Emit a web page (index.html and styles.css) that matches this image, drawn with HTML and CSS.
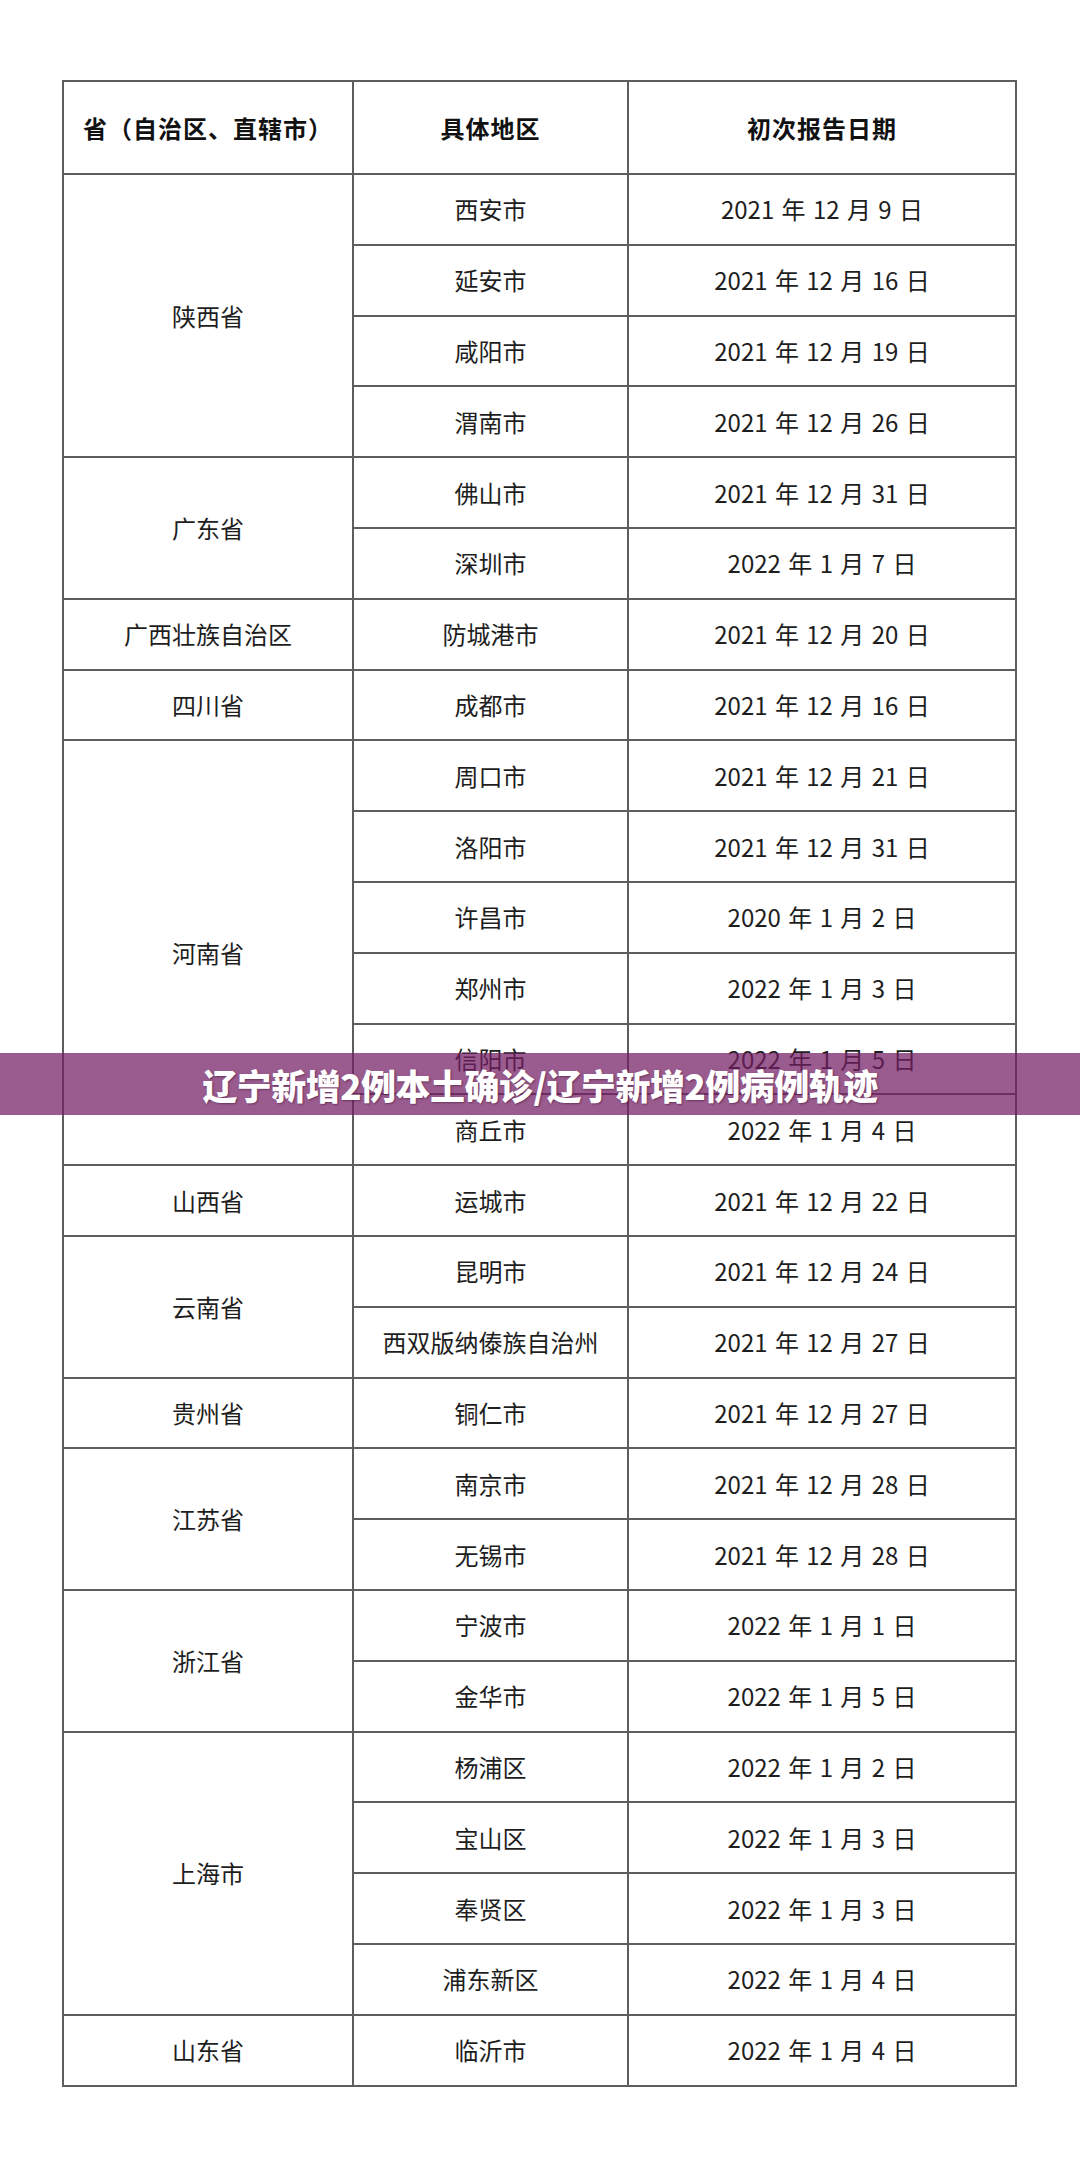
FILE: index.html
```html
<!DOCTYPE html>
<html lang="zh-CN">
<head>
<meta charset="utf-8">
<title>辽宁新增2例本土确诊</title>
<link rel="stylesheet" href="styles.css">
</head>
<body>
<div class="page">
  <table class="cases">
    <colgroup>
      <col class="c1"><col class="c2"><col class="c3">
    </colgroup>
    <thead>
      <tr><th>省（自治区、直辖市）</th><th>具体地区</th><th>初次报告日期</th></tr>
    </thead>
    <tbody>
      <tr><td rowspan="4">陕西省</td><td>西安市</td><td class="date">2021 年 12 月 9 日</td></tr>
      <tr><td>延安市</td><td class="date">2021 年 12 月 16 日</td></tr>
      <tr><td>咸阳市</td><td class="date">2021 年 12 月 19 日</td></tr>
      <tr><td>渭南市</td><td class="date">2021 年 12 月 26 日</td></tr>
      <tr><td rowspan="2">广东省</td><td>佛山市</td><td class="date">2021 年 12 月 31 日</td></tr>
      <tr><td>深圳市</td><td class="date">2022 年 1 月 7 日</td></tr>
      <tr><td>广西壮族自治区</td><td>防城港市</td><td class="date">2021 年 12 月 20 日</td></tr>
      <tr><td>四川省</td><td>成都市</td><td class="date">2021 年 12 月 16 日</td></tr>
      <tr><td rowspan="6">河南省</td><td>周口市</td><td class="date">2021 年 12 月 21 日</td></tr>
      <tr><td>洛阳市</td><td class="date">2021 年 12 月 31 日</td></tr>
      <tr><td>许昌市</td><td class="date">2020 年 1 月 2 日</td></tr>
      <tr><td>郑州市</td><td class="date">2022 年 1 月 3 日</td></tr>
      <tr><td>信阳市</td><td class="date">2022 年 1 月 5 日</td></tr>
      <tr><td>商丘市</td><td class="date">2022 年 1 月 4 日</td></tr>
      <tr><td>山西省</td><td>运城市</td><td class="date">2021 年 12 月 22 日</td></tr>
      <tr><td rowspan="2">云南省</td><td>昆明市</td><td class="date">2021 年 12 月 24 日</td></tr>
      <tr><td>西双版纳傣族自治州</td><td class="date">2021 年 12 月 27 日</td></tr>
      <tr><td>贵州省</td><td>铜仁市</td><td class="date">2021 年 12 月 27 日</td></tr>
      <tr><td rowspan="2">江苏省</td><td>南京市</td><td class="date">2021 年 12 月 28 日</td></tr>
      <tr><td>无锡市</td><td class="date">2021 年 12 月 28 日</td></tr>
      <tr><td rowspan="2">浙江省</td><td>宁波市</td><td class="date">2022 年 1 月 1 日</td></tr>
      <tr><td>金华市</td><td class="date">2022 年 1 月 5 日</td></tr>
      <tr><td rowspan="4">上海市</td><td>杨浦区</td><td class="date">2022 年 1 月 2 日</td></tr>
      <tr><td>宝山区</td><td class="date">2022 年 1 月 3 日</td></tr>
      <tr><td>奉贤区</td><td class="date">2022 年 1 月 3 日</td></tr>
      <tr><td>浦东新区</td><td class="date">2022 年 1 月 4 日</td></tr>
      <tr><td>山东省</td><td>临沂市</td><td class="date">2022 年 1 月 4 日</td></tr>
    </tbody>
  </table>
  <div class="banner"><span class="banner-text">辽宁新增2例本土确诊/辽宁新增2例病例轨迹</span></div>
</div>
</body>
</html>
```

FILE: styles.css
```css
html, body {
  margin: 0;
  padding: 0;
  background: #ffffff;
}

.page {
  position: relative;
  width: 1080px;
  height: 2169px;
  padding-top: 80px;
  box-sizing: border-box;
  font-family: "Noto Sans CJK SC", "Noto Sans", sans-serif;
  color: #1e1e1e;
}

.cases {
  margin-left: 62px;
  width: 953px;
  border-collapse: collapse;
  table-layout: fixed;
  border: 2px solid #555555;
}

.c1 { width: 290px; }
.c2 { width: 275px; }
.c3 { width: 388px; }

.cases th,
.cases td {
  border: 2px solid #5e5e5e;
  text-align: center;
  vertical-align: middle;
  padding: 0;
  font-size: 24px;
  line-height: 30px;
}

.cases th {
  height: 91px;
  font-weight: 700;
  color: #111111;
  letter-spacing: 1px;
}

.cases td {
  height: 68.8px;
  font-weight: 400;
}

.cases td.date {
  word-spacing: 2px;
}

.banner {
  position: absolute;
  left: 0;
  top: 1053px;
  width: 1080px;
  height: 62px;
  background: rgba(115, 29, 98, 0.72);
  display: flex;
  align-items: center;
  justify-content: center;
}

.banner-text {
  color: #ffffff;
  font-size: 35px;
  font-weight: 900;
  line-height: 1;
  letter-spacing: -0.5px;
  text-shadow: 1px 1px 2px rgba(60, 10, 50, 0.5);
}
```
